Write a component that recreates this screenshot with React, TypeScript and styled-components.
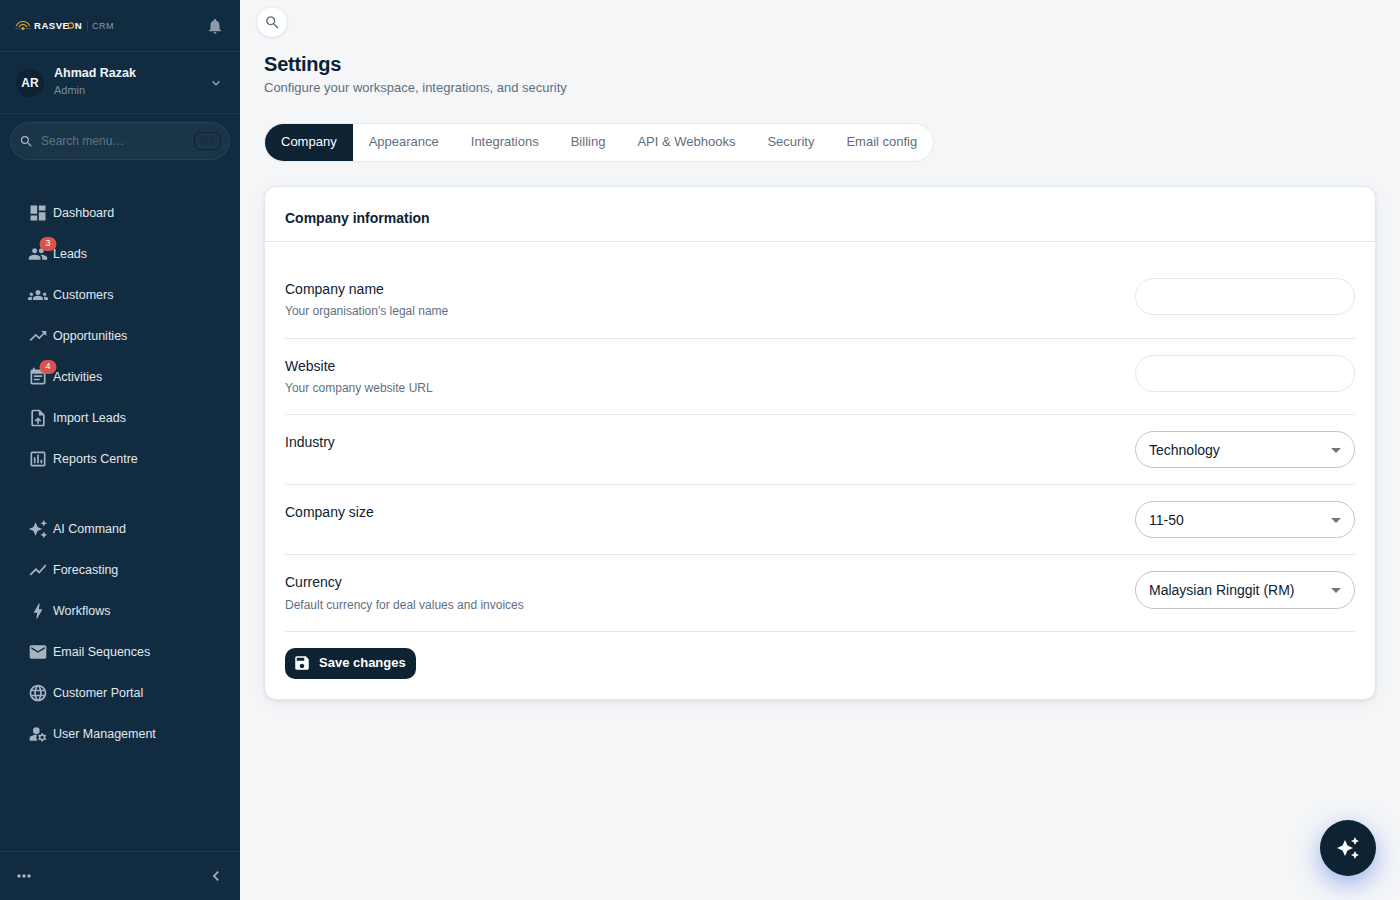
import React from "react";
import styled, { createGlobalStyle } from "styled-components";
import {
  MdArrowDropDown,
  MdAutoAwesome,
  MdBolt,
  MdChevronLeft,
  MdDashboard,
  MdEmail,
  MdEventNote,
  MdGroups,
  MdKeyboardArrowDown,
  MdLanguage,
  MdManageAccounts,
  MdMoreHoriz,
  MdNotifications,
  MdOutlineAssessment,
  MdOutlineUploadFile,
  MdPeople,
  MdSave,
  MdSearch,
  MdShowChart,
  MdTrendingUp,
} from "react-icons/md";
import type { IconType } from "react-icons";

const navy = "#0d2232";
const line = "#e2e8f0";
const muted = "#5f6f7f";

const GlobalStyle = createGlobalStyle`
  * { box-sizing: border-box; }
  body {
    margin: 0;
    background: #f4f6f8;
    color: ${navy};
    font-family: "Liberation Sans", Arial, sans-serif;
  }
  button, input { font-family: inherit; }
  svg { display: block; flex-shrink: 0; }
`;

const Shell = styled.div`
  display: flex;
  height: 900px;
  overflow: hidden;
`;

const Sidebar = styled.aside`
  display: flex;
  flex-direction: column;
  width: 240px;
  flex-shrink: 0;
  background: #112b40;
  color: #e6ebf0;
`;

const BrandBar = styled.div`
  display: flex;
  align-items: center;
  justify-content: space-between;
  height: 52px;
  padding: 0 16px 0 14px;
  border-bottom: 1px solid #1e394f;
  color: #8b9baa;
`;

const UserPanel = styled.div`
  display: flex;
  align-items: center;
  height: 62px;
  padding: 0 16px;
  border-bottom: 1px solid #1e394f;
  color: #94a3b1;
`;

const Avatar = styled.div`
  display: grid;
  place-items: center;
  width: 28px;
  height: 28px;
  border-radius: 50%;
  background: ${navy};
  color: #f4f6f8;
  font-size: 12px;
  font-weight: 700;
`;

const UserText = styled.div`
  flex: 1;
  margin: -3px 0 0 10px;
`;

const UserName = styled.div`
  color: #f1f4f7;
  font-size: 12.5px;
  line-height: 18px;
  font-weight: 700;
`;

const UserRole = styled.div`
  color: #7b8c9b;
  font-size: 11px;
  line-height: 16px;
`;

const MenuSearch = styled.div`
  display: flex;
  align-items: center;
  height: 38px;
  margin: 8px 10px 0;
  padding: 0 8px;
  border: 1px solid #274156;
  border-radius: 19px;
  background: #1b3548;
  color: #a3b0bc;
`;

const MenuSearchText = styled.span`
  flex: 1;
  margin-left: 7px;
  color: #5e7282;
  font-size: 12px;
`;

const Shortcut = styled.span`
  display: grid;
  place-items: center;
  width: 27px;
  height: 18px;
  border: 1px solid ${navy};
  border-radius: 6px;
  color: #122c3e;
  font-size: 11px;
`;

const Nav = styled.nav`
  flex: 1;
  padding-top: 32.5px;
`;

const NavGroup = styled.div`
  margin-bottom: 29px;
`;

const NavItem = styled.div`
  display: flex;
  align-items: center;
  height: 41px;
  padding-left: 28px;
  font-size: 12.5px;
  color: #e2e8ee;
`;

const NavIcon = styled.span`
  position: relative;
  width: 20px;
  margin-right: 5px;
  color: #a5b3c1;
`;

const Badge = styled.span`
  position: absolute;
  top: -7px;
  left: 12px;
  width: 17px;
  height: 14px;
  border-radius: 7px;
  background: #d9534a;
  color: #ffffff;
  font-size: 9px;
  line-height: 13px;
  text-align: center;
  transform: translateX(-0.5px);
`;

const SideFooter = styled.div`
  display: flex;
  align-items: center;
  justify-content: space-between;
  height: 49px;
  padding: 0 14px;
  border-top: 1px solid #1e394f;
  color: #a9b5c1;
`;

const Main = styled.main`
  flex: 1;
  padding: 6px 24px 0;
`;

const RoundSearch = styled.button`
  display: grid;
  place-items: center;
  width: 32px;
  height: 32px;
  margin-left: -8px;
  padding: 0;
  border: 1px solid ${line};
  border-radius: 50%;
  background: #ffffff;
  color: ${muted};
  box-shadow: 0 1px 3px rgba(13, 34, 50, 0.06);
`;

const Title = styled.h1`
  margin: 14px 0 0;
  font-size: 20px;
  line-height: 24px;
  letter-spacing: -0.2px;
`;

const Subtitle = styled.p`
  margin: 2px 0 0;
  color: ${muted};
  font-size: 13px;
  line-height: 20px;
`;

const Tabs = styled.div`
  display: inline-flex;
  height: 39px;
  margin-top: 25px;
  border: 1px solid ${line};
  border-radius: 20px;
  background: #ffffff;
  overflow: hidden;
`;

const Tab = styled.button<{ $active?: boolean }>`
  padding: 0 16px 3px;
  border: 0;
  background: ${(p) => (p.$active ? navy : "transparent")};
  color: ${(p) => (p.$active ? "#ffffff" : muted)};
  font-size: 13px;
`;

const Card = styled.section`
  height: 514px;
  margin-top: 24px;
  border: 1px solid ${line};
  border-radius: 12px;
  background: #ffffff;
  box-shadow: 0 1px 3px rgba(13, 34, 50, 0.08), 0 4px 16px rgba(13, 34, 50, 0.05);
`;

const CardTitle = styled.h2`
  height: 55px;
  margin: 0;
  padding: 20px 20px 0;
  border-bottom: 1px solid ${line};
  font-size: 14px;
  line-height: 22px;
`;

const CardBody = styled.div`
  padding: 20px;
`;

const Field = styled.div`
  display: flex;
  justify-content: space-between;
  align-items: flex-start;
  padding: 16px 0;
  border-bottom: 1px solid ${line};
`;

const FieldLabel = styled.div`
  font-size: 14px;
  line-height: 22px;
`;

const FieldHint = styled.div`
  padding: 2.25px 0 0.75px;
  color: ${muted};
  font-size: 12px;
  line-height: 18.6px;
`;

const TextInput = styled.input`
  width: 220px;
  height: 37px;
  padding: 0 13px;
  border: 1px solid ${line};
  border-radius: 19px;
  background: #ffffff;
`;

const SelectBox = styled.div`
  display: flex;
  align-items: center;
  justify-content: space-between;
  width: 220px;
  height: 37.125px;
  padding: 0 6px 0 13px;
  border: 1px solid #c4c4c4;
  border-radius: 19px;
  font-size: 14px;

  svg { color: #757575; }
`;

const SaveButton = styled.button`
  display: flex;
  align-items: center;
  gap: 8px;
  width: 131px;
  height: 31px;
  margin-top: 16px;
  padding: 0 0 0 8px;
  border: 0;
  border-radius: 10px;
  background: ${navy};
  color: #ffffff;
  font-size: 13px;
  font-weight: 700;

  svg { margin-bottom: 1px; }
`;

const SaveLabel = styled.span`
  padding-bottom: 2px;
`;

const AssistantButton = styled.button`
  position: fixed;
  right: 24px;
  bottom: 24px;
  display: grid;
  place-items: center;
  width: 56px;
  height: 56px;
  padding: 0;
  border: 0;
  border-radius: 50%;
  background: ${navy};
  color: #ffffff;
  box-shadow: 0 8px 24px rgba(65, 105, 225, 0.5);
`;

interface NavEntry {
  label: string;
  icon: IconType;
  count?: number;
}

const navGroups: NavEntry[][] = [
  [
    { label: "Dashboard", icon: MdDashboard },
    { label: "Leads", icon: MdPeople, count: 3 },
    { label: "Customers", icon: MdGroups },
    { label: "Opportunities", icon: MdTrendingUp },
    { label: "Activities", icon: MdEventNote, count: 4 },
    { label: "Import Leads", icon: MdOutlineUploadFile },
    { label: "Reports Centre", icon: MdOutlineAssessment },
  ],
  [
    { label: "AI Command", icon: MdAutoAwesome },
    { label: "Forecasting", icon: MdShowChart },
    { label: "Workflows", icon: MdBolt },
    { label: "Email Sequences", icon: MdEmail },
    { label: "Customer Portal", icon: MdLanguage },
    { label: "User Management", icon: MdManageAccounts },
  ],
];

const tabs = ["Company", "Appearance", "Integrations", "Billing", "API & Webhooks", "Security", "Email config"];

interface FieldEntry {
  label: string;
  hint?: string;
  value?: string;
}

const fields: FieldEntry[] = [
  { label: "Company name", hint: "Your organisation's legal name" },
  { label: "Website", hint: "Your company website URL" },
  { label: "Industry", value: "Technology" },
  { label: "Company size", value: "11-50" },
  { label: "Currency", hint: "Default currency for deal values and invoices", value: "Malaysian Ringgit (RM)" },
];

function Logo() {
  return (
    <svg width="104" height="16" viewBox="0 0 104 16" fontFamily="Liberation Sans, Arial, sans-serif">
      <path d="M1 10.6H17" stroke="#4a5c6b" strokeWidth="0.8" />
      <g fill="none" stroke="#e8a030" strokeLinecap="round">
        <path d="M2.4 7.7C5.2 2.1 12.8 2.1 15.6 7.7" strokeWidth="1.1" />
        <path d="M5.2 8.8C7 5.5 11 5.5 12.8 8.8" strokeWidth="1.1" />
      </g>
      <circle cx="9" cy="10.5" r="1.5" fill="#e8a030" />
      <text x="20" y="11" fill="#ffffff" fontSize="9.6" fontWeight="700" textLength="35">RASVE</text>
      <circle cx="56.8" cy="7.5" r="2.7" fill="none" stroke="#e8a030" strokeWidth="1.3" />
      <text x="60.8" y="11" fill="#ffffff" fontSize="9.6" fontWeight="700">N</text>
      <path d="M73.5 2.5V13.5" stroke="#2c4457" strokeWidth="1" />
      <text x="78" y="11" fill="#8a9aa8" fontSize="9" letterSpacing="0.5">CRM</text>
    </svg>
  );
}

export default function App() {
  return (
    <>
      <GlobalStyle />
      <Shell>
        <Sidebar>
          <BrandBar>
            <Logo />
            <MdNotifications size={18} />
          </BrandBar>
          <UserPanel>
            <Avatar>AR</Avatar>
            <UserText>
              <UserName>Ahmad Razak</UserName>
              <UserRole>Admin</UserRole>
            </UserText>
            <MdKeyboardArrowDown size={16} />
          </UserPanel>
          <MenuSearch>
            <MdSearch size={15} />
            <MenuSearchText>Search menu…</MenuSearchText>
            <Shortcut>⌘K</Shortcut>
          </MenuSearch>
          <Nav>
            {navGroups.map((group, i) => (
              <NavGroup key={i}>
                {group.map(({ label, icon: Icon, count }) => (
                  <NavItem key={label}>
                    <NavIcon>
                      <Icon size={20} />
                      {count && <Badge>{count}</Badge>}
                    </NavIcon>
                    {label}
                  </NavItem>
                ))}
              </NavGroup>
            ))}
          </Nav>
          <SideFooter>
            <MdMoreHoriz size={20} />
            <MdChevronLeft size={20} />
          </SideFooter>
        </Sidebar>
        <Main>
          <RoundSearch aria-label="Search">
            <MdSearch size={17} />
          </RoundSearch>
          <Title>Settings</Title>
          <Subtitle>Configure your workspace, integrations, and security</Subtitle>
          <Tabs>
            {tabs.map((tab, i) => (
              <Tab key={tab} $active={i === 0}>
                {tab}
              </Tab>
            ))}
          </Tabs>
          <Card>
            <CardTitle>Company information</CardTitle>
            <CardBody>
              {fields.map(({ label, hint, value }) => (
                <Field key={label}>
                  <div>
                    <FieldLabel>{label}</FieldLabel>
                    {hint && <FieldHint>{hint}</FieldHint>}
                  </div>
                  {value ? (
                    <SelectBox>
                      {value}
                      <MdArrowDropDown size={24} />
                    </SelectBox>
                  ) : (
                    <TextInput aria-label={label} />
                  )}
                </Field>
              ))}
              <SaveButton>
                <MdSave size={18} />
                <SaveLabel>Save changes</SaveLabel>
              </SaveButton>
            </CardBody>
          </Card>
        </Main>
      </Shell>
      <AssistantButton aria-label="Assistant">
        <MdAutoAwesome size={24} />
      </AssistantButton>
    </>
  );
}
